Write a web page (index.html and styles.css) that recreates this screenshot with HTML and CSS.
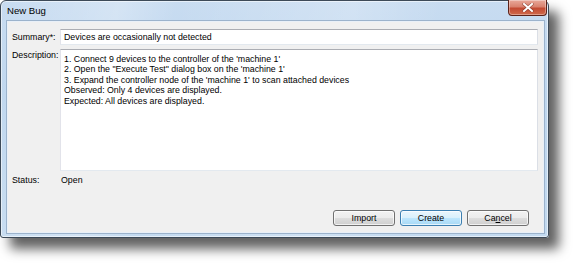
FILE: index.html
```html
<!DOCTYPE html>
<html>
<head>
<meta charset="utf-8">
<link rel="stylesheet" href="styles.css">
</head>
<body>
<div class="window">
  <div class="titlebar">
    <span class="title">New Bug</span>
    <div class="close" aria-label="Close">
      <svg width="12" height="9" viewBox="0 0 12 9">
        <path d="M2 1 L10 8 M10 1 L2 8" stroke="#6b2a20" stroke-width="3.2" stroke-linecap="square" opacity="0.55"/>
        <path d="M2 1 L10 8 M10 1 L2 8" stroke="#ffffff" stroke-width="2" stroke-linecap="square"/>
      </svg>
    </div>
  </div>
  <div class="client">
    <div class="form">
      <div class="label">Summary*:</div>
      <div class="field input">Devices are occasionally not detected</div>
      <div class="label label-top">Description:</div>
      <div class="field textarea">1. Connect 9 devices to the controller of the 'machine 1'
2. Open the "Execute Test" dialog box on the 'machine 1'
3. Expand the controller node of the 'machine 1' to scan attached devices
Observed: Only 4 devices are displayed.
Expected: All devices are displayed.</div>
      <div class="label status">Status:</div>
      <div class="value status">Open</div>
    </div>
    <div class="buttons">
      <div class="btn">Import</div>
      <div class="btn default">Create</div>
      <div class="btn">Ca<u>n</u>cel</div>
    </div>
  </div>
</div>
</body>
</html>
```
FILE: styles.css
```css
html, body {
  margin: 0;
  padding: 0;
  background: #ffffff;
}
body {
  width: 578px;
  height: 267px;
  overflow: hidden;
  font-family: "Liberation Sans", Arial, sans-serif;
  font-size: 8.8px;
  color: #000;
}
.window {
  width: 549px;
  height: 238px;
  box-sizing: border-box;
  display: flex;
  flex-direction: column;
  border: 1px solid #3d4a58;
  border-radius: 6px 6px 3px 3px;
  background:
    linear-gradient(100deg, rgba(255,255,255,0) 0%, rgba(255,255,255,0.25) 20%, rgba(255,255,255,0) 30%, rgba(255,255,255,0.2) 60%, rgba(255,255,255,0) 75%),
    linear-gradient(180deg, #c8dcf1 0%, #bed6ee 40%, #c3daf0 100%);
  box-shadow: inset 0 0 0 1px rgba(255,255,255,0.55), 10px 11px 12px rgba(0,0,0,0.62);
}
.titlebar {
  height: 20px;
  display: flex;
  align-items: flex-start;
}
.title {
  font-size: 9.6px;
  padding: 4px 0 0 6px;
  color: #000;
}
.close {
  margin-left: auto;
  margin-right: 1px;
  margin-top: -1px;
  width: 39px;
  height: 16px;
  box-sizing: border-box;
  border: 1px solid #5c2219;
  border-top: none;
  border-radius: 0 0 4px 4px;
  background: linear-gradient(180deg, #e9a99b 0%, #d9826f 45%, #c34a33 55%, #cf6a4c 100%);
  box-shadow: inset 0 0 0 1px rgba(255,255,255,0.35);
  display: flex;
  align-items: center;
  justify-content: center;
}
.client {
  flex: 1;
  margin: 0 4px 4px 6px;
  border: 1px solid #e9f0f8;
  outline: 1px solid #9cb3cc;
  background: #f0f0f0;
  display: flex;
  flex-direction: column;
  padding: 7px 5px 6px 4px;
}
.form {
  display: grid;
  grid-template-columns: 48px 1fr;
  grid-template-rows: 16px 122px 11px;
  row-gap: 4px;
}
.label {
  align-self: center;
  color: #000;
  white-space: nowrap;
}
.label-top {
  align-self: start;
  padding-top: 1px;
}
.field {
  background: #fff;
  border: 1px solid #abadb3;
  border-left-color: #e2e3ea;
  border-right-color: #dbdfe6;
  border-bottom-color: #e3e9ef;
  box-sizing: border-box;
}
.input {
  padding: 0 3px;
  line-height: 14px;
}
.textarea {
  padding: 4px 3px;
  line-height: 10.4px;
  white-space: pre-line;
  border-color: #abadb3 #dbdfe6 #e3e9ef #e2e3ea;
}
.status {
  align-self: center;
  line-height: 11px;
}
.value {
  padding-left: 1px;
}
.buttons {
  margin-top: auto;
  display: flex;
  justify-content: flex-end;
  gap: 5px;
  padding-right: 9px;
}
.btn {
  width: 62px;
  height: 16px;
  box-sizing: border-box;
  border: 1px solid #707070;
  border-radius: 3px;
  background: linear-gradient(180deg, #f2f2f2 0%, #ebebeb 50%, #dddddd 51%, #cfcfcf 100%);
  box-shadow: inset 0 0 0 1px rgba(255,255,255,0.7);
  display: flex;
  align-items: center;
  justify-content: center;
  line-height: 1;
}
.btn.default {
  border-color: #3c7fb1;
  background: linear-gradient(180deg, #eaf6fd 0%, #d9f0fc 50%, #bee6fd 51%, #a7d9f5 100%);
}
```
